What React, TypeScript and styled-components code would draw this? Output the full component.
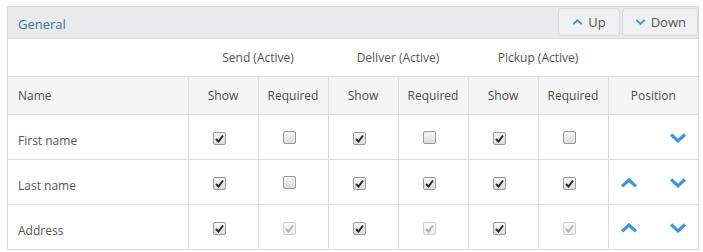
import React from 'react';
import styled, { createGlobalStyle } from 'styled-components';

const GlobalStyle = createGlobalStyle`
    body {
        margin: 0;
        background: #ffffff;
        font-family: "Open Sans", "Liberation Sans", sans-serif;
    }
`;

interface Field {
    name: string,
    send: [boolean, boolean, boolean],
    deliver: [boolean, boolean, boolean],
    pickup: [boolean, boolean, boolean],
    canUp: boolean,
    canDown: boolean,
}

// [show, required, requiredDisabled]
const fields: Array<Field> = [
    { name: 'First name', send: [true, false, false], deliver: [true, false, false], pickup: [true, false, false], canUp: false, canDown: true },
    { name: 'Last name', send: [true, false, false], deliver: [true, true, false], pickup: [true, true, false], canUp: true, canDown: true },
    { name: 'Address', send: [true, true, true], deliver: [true, true, true], pickup: [true, true, true], canUp: true, canDown: true },
];

const Check = ({ checked, disabled }: { checked: boolean, disabled?: boolean }) => (
    <Box $disabled={disabled}>
        {checked && (
            <svg width="9" height="9" viewBox="0 0 9 9">
                <path d="M1 5 L3.5 7.5 L8 1.5" fill="none" stroke={disabled ? '#b0b0b0' : '#2b2b2b'} strokeWidth="2" />
            </svg>
        )}
    </Box>
);

const Chevron = ({ up, size = 18 }: { up?: boolean, size?: number }) => (
    <svg width={size} height={size * 0.55} viewBox="0 0 18 10">
        <path
            d={up ? 'M2 8.5 L9 2 L16 8.5' : 'M2 1.5 L9 8 L16 1.5'}
            fill="none"
            stroke="#3a97dc"
            strokeWidth="3.2"
        />
    </svg>
);

export default function App() {
    return (
        <>
            <GlobalStyle />
            <Panel>
                <Header>
                    <Title>General</Title>
                    <Tools>
                        <ToolButton><Chevron up size={11} />Up</ToolButton>
                        <ToolButton><Chevron size={11} />Down</ToolButton>
                    </Tools>
                </Header>
                <Table>
                    <colgroup>
                        <col style={{ width: 180 }} />
                        {Array.from({ length: 6 }).map((_, i) => <col key={i} style={{ width: 70 }} />)}
                        <col />
                    </colgroup>
                    <thead>
                        <GroupRow>
                            <th />
                            <th colSpan={2}>Send (Active)</th>
                            <th colSpan={2}>Deliver (Active)</th>
                            <th colSpan={2}>Pickup (Active)</th>
                            <th />
                        </GroupRow>
                        <HeadRow>
                            <NameHead>Name</NameHead>
                            <th>Show</th>
                            <th>Required</th>
                            <th>Show</th>
                            <th>Required</th>
                            <th>Show</th>
                            <th>Required</th>
                            <th>Position</th>
                        </HeadRow>
                    </thead>
                    <tbody>
                        {fields.map((f) => (
                            <BodyRow key={f.name}>
                                <NameCell>{f.name}</NameCell>
                                {[f.send, f.deliver, f.pickup].map((g, i) => (
                                    <React.Fragment key={i}>
                                        <CheckCell><Check checked={g[0]} /></CheckCell>
                                        <CheckCell><Check checked={g[1]} disabled={g[2]} /></CheckCell>
                                    </React.Fragment>
                                ))}
                                <PositionCell>
                                    <Arrows>
                                        <Arrow $hidden={!f.canUp}><Chevron up /></Arrow>
                                        <Arrow $hidden={!f.canDown}><Chevron /></Arrow>
                                    </Arrows>
                                </PositionCell>
                            </BodyRow>
                        ))}
                    </tbody>
                </Table>
            </Panel>
        </>
    );
}

const Panel = styled.div`
    margin: 6px 0 0 7px;
    width: 690px;
    border: 1px solid #dadada;
    border-bottom: none;
    background: #ffffff;
`;

const Header = styled.div`
    height: 31px;
    display: flex;
    align-items: flex-start;
    justify-content: space-between;
    background: #e9eaec;
    border-bottom: 1px solid #dadada;
`;

const Title = styled.div`
    padding: 8px 0 0 10px;
    font-size: 13px;
    color: #3b6fa6;
`;

const Tools = styled.div`
    display: flex;
    gap: 2px;
    padding-top: 1px;
`;

const ToolButton = styled.div`
    height: 26px;
    padding: 0 12px 0 12px;
    display: flex;
    align-items: center;
    gap: 5px;
    background: #eef0f2;
    border: 1px solid #d6d9dd;
    border-radius: 4px 4px 3px 3px;
    font-size: 13px;
    color: #555555;
    &:first-child {
        padding: 0 13px 0 13px;
    }
    &:last-child {
        padding: 0 11px 0 12px;
    }
`;

const Table = styled.table`
    width: 100%;
    border-collapse: collapse;
    table-layout: fixed;
    font-size: 12px;
    color: #555555;

    th {
        font-weight: normal;
        text-align: center;
        padding: 0;
    }
`;

const GroupRow = styled.tr`
    height: 37px;
    th {
        color: #555555;
        padding-top: 1px;
    }
`;

const HeadRow = styled.tr`
    height: 38px;
    background: #f5f5f5;
    border-top: 1px solid #dddddd;
    border-bottom: 1px solid #dddddd;
    th {
        color: #4c4c4c;
        border-left: 1px solid #dddddd;
    }
    th:first-child {
        border-left: none;
    }
`;

const NameHead = styled.th`
    && {
        text-align: left;
        padding-left: 10px;
    }
`;

const BodyRow = styled.tr`
    height: 45px;
    border-bottom: 1px solid #dddddd;
    td {
        border-left: 1px solid #dddddd;
        padding: 8px 0 0 0;
    }
    td:first-child {
        border-left: none;
    }
`;

const NameCell = styled.td`
    padding-left: 10px !important;
    color: #555555;
`;

const CheckCell = styled.td`
    text-align: center;
`;

const PositionCell = styled.td`
    && {
        padding-top: 3px;
    }
`;

const Arrows = styled.div`
    display: flex;
    justify-content: space-between;
    padding: 0 11px 0 11px;
`;

const Arrow = styled.span<{ $hidden?: boolean }>`
    display: flex;
    visibility: ${(p) => (p.$hidden ? 'hidden' : 'visible')};
`;

const Box = styled.span<{ $disabled?: boolean }>`
    display: inline-flex;
    align-items: center;
    justify-content: center;
    vertical-align: 2px;
    box-sizing: border-box;
    width: 13px;
    height: 13px;
    margin-right: 8px;
    border-radius: 2px;
    border: 1px solid ${(p) => (p.$disabled ? '#d0d0d0' : '#9a9a9a')};
    background: ${(p) => (p.$disabled
        ? 'linear-gradient(#fafafa, #ececec)'
        : 'linear-gradient(#f6f6f6, #dcdcdc)')};
`;
